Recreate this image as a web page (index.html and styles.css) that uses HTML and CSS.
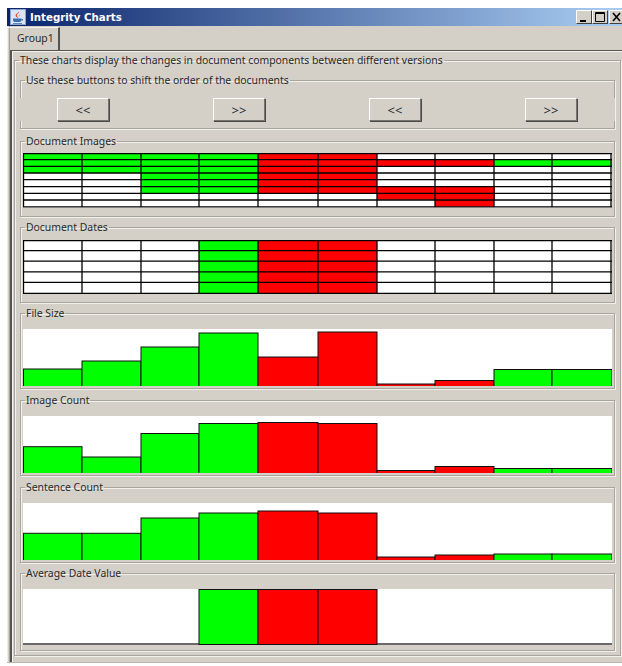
FILE: index.html
```html
<!DOCTYPE html>
<html lang="en">
<head>
<meta charset="utf-8">
<title>Integrity Charts</title>
<link rel="stylesheet" href="styles.css">
</head>
<body>
<div class="window">
  <header class="titlebar">
    <svg class="app-icon" width="16" height="16" viewBox="0 0 16 16">
      <rect width="16" height="16" fill="#dbe4f4"/>
      <rect x="0.5" y="0.5" width="15" height="15" fill="none" stroke="#8fa3cc"/>
      <path d="M9 2c1 2-3 3-2 5 .4.8 1 1 1 2-1-.6-2.400-1.300-2.400-2.600C5.600 4.500 9 4 9 2z" fill="#e0401c"/>
      <path d="M10 5c.5 1.200-1.500 2-1 3.500-.9-1.500.3-2.600 1-3.500z" fill="#e8822c"/>
      <path d="M3 9.500h8.500v1.600c0 1.200-1 1.900-2 1.900h-4.500c-1 0-2-.7-2-1.900z" fill="#3d6fb0"/>
      <path d="M11.500 10h1.500v1.500h-1.500z" fill="#3d6fb0"/>
      <path d="M3 14h9v1h-9z" fill="#5b86bd"/>
    </svg>
    <span class="title-text">Integrity Charts</span>
    <div class="caption-buttons">
      <button class="caption-btn" type="button" aria-label="Minimize"><svg width="12" height="10" viewBox="0 0 12 10"><path d="M2 8h6v2H2z" fill="#000"/></svg></button>
      <button class="caption-btn" type="button" aria-label="Maximize"><svg width="12" height="10" viewBox="0 0 12 10"><path d="M1.500.500h9v9h-9zM1 1.500h10" fill="none" stroke="#000"/></svg></button>
      <button class="caption-btn caption-close" type="button" aria-label="Close"><svg width="12" height="10" viewBox="0 0 12 10"><path d="M2 1l7 8M9 1l-7 8" fill="none" stroke="#000" stroke-width="1.600"/></svg></button>
    </div>
  </header>

  <div class="tabstrip"><div class="tab">Group1</div></div>

  <div class="pane">
    <fieldset class="group outer">
      <legend>These charts display the changes in document components between different versions</legend>

      <fieldset class="group controls">
        <legend>Use these buttons to shift the order of the documents</legend>
        <div class="button-row">
          <button class="shift" type="button">&lt;&lt;</button>
          <button class="shift" type="button">&gt;&gt;</button>
          <button class="shift" type="button">&lt;&lt;</button>
          <button class="shift" type="button">&gt;&gt;</button>
        </div>
      </fieldset>

      <div class="sections">
        <fieldset class="group images">
          <legend>Document Images</legend>
          <svg class="chart" width="589" height="55" viewBox="0 0 589 55">
            <rect class="blank" width="589" height="55"/>
            <rect class="up" x="0" y="0" width="118" height="20"/>
            <rect class="up" x="118" y="0" width="117" height="40"/>
            <rect class="down" x="235" y="0" width="119" height="40"/>
            <rect class="down" x="354" y="6.670" width="118" height="6.670"/>
            <rect class="up" x="471" y="6.670" width="118" height="6.670"/>
            <rect class="down" x="354" y="33.300" width="118" height="13.400"/>
            <rect class="down" x="412" y="46.700" width="59" height="7"/>
            <path class="grid" d="M0 .5H589M0 6.700H589M0 13.300H589M0 20H589M0 26.700H589M0 33.700H589M0 40.300H589M0 47H589M0 53.800H589"/>
            <path class="grid" d="M.5 0V54M59 0V54M118 0V54M176 0V54M235 0V54M295 0V54M354 0V54M412 0V54M471 0V54M529 0V54M588 0V54"/>
          </svg>
        </fieldset>

        <fieldset class="group dates">
          <legend>Document Dates</legend>
          <svg class="chart" width="589" height="54" viewBox="0 0 589 54">
            <rect class="blank" width="589" height="54"/>
            <rect class="up" x="176" y="0" width="59" height="54"/>
            <rect class="down" x="235" y="0" width="119" height="54"/>
            <path class="grid" d="M0 .5H589M0 10.600H589M0 21.200H589M0 31.800H589M0 42.400H589M0 53.300H589"/>
            <path class="grid" d="M.5 0V54M59 0V54M118 0V54M176 0V54M235 0V54M295 0V54M354 0V54M412 0V54M471 0V54M529 0V54M588 0V54"/>
          </svg>
        </fieldset>

        <fieldset class="group bars">
          <legend>File Size</legend>
          <svg class="chart" width="589" height="57" viewBox="0 0 589 57">
            <rect class="blank" width="589" height="57"/>
            <rect class="up bar" x=".5" y="40" width="58.500" height="20"/>
            <rect class="up bar" x="59" y="32" width="59" height="28"/>
            <rect class="up bar" x="118" y="18" width="58" height="42"/>
            <rect class="up bar" x="176" y="4" width="59" height="56"/>
            <rect class="down bar" x="235" y="28" width="60" height="32"/>
            <rect class="down bar" x="295" y="3" width="59" height="57"/>
            <rect class="down bar" x="354" y="55" width="58" height="5"/>
            <rect class="down bar" x="412" y="51.500" width="59" height="8"/>
            <rect class="up bar" x="471" y="40.500" width="58" height="20"/>
            <rect class="up bar" x="529" y="40.500" width="60" height="20"/>
          </svg>
        </fieldset>

        <fieldset class="group bars">
          <legend>Image Count</legend>
          <svg class="chart" width="589" height="57" viewBox="0 0 589 57">
            <rect class="blank" width="589" height="57"/>
            <rect class="up bar" x=".5" y="30.700" width="58.500" height="30"/>
            <rect class="up bar" x="59" y="41" width="59" height="20"/>
            <rect class="up bar" x="118" y="17.500" width="58" height="43"/>
            <rect class="up bar" x="176" y="7.500" width="59" height="53"/>
            <rect class="down bar" x="235" y="6.500" width="60" height="54"/>
            <rect class="down bar" x="295" y="7.500" width="59" height="53"/>
            <rect class="down bar" x="354" y="54.500" width="58" height="6"/>
            <rect class="down bar" x="412" y="50.500" width="59" height="10"/>
            <rect class="up bar" x="471" y="52.500" width="58" height="8"/>
            <rect class="up bar" x="529" y="52.500" width="60" height="8"/>
          </svg>
        </fieldset>

        <fieldset class="group bars">
          <legend>Sentence Count</legend>
          <svg class="chart" width="589" height="57" viewBox="0 0 589 57">
            <rect class="blank" width="589" height="57"/>
            <rect class="up bar" x=".5" y="30.300" width="58.500" height="30"/>
            <rect class="up bar" x="59" y="30.300" width="59" height="30"/>
            <rect class="up bar" x="118" y="15" width="58" height="45"/>
            <rect class="up bar" x="176" y="10" width="59" height="50"/>
            <rect class="down bar" x="235" y="8" width="60" height="52"/>
            <rect class="down bar" x="295" y="10" width="59" height="50"/>
            <rect class="down bar" x="354" y="54" width="58" height="6"/>
            <rect class="down bar" x="412" y="52" width="59" height="8"/>
            <rect class="up bar" x="471" y="51" width="58" height="9"/>
            <rect class="up bar" x="529" y="51" width="60" height="9"/>
          </svg>
        </fieldset>

        <fieldset class="group bars last">
          <legend>Average Date Value</legend>
          <svg class="chart" width="589" height="56" viewBox="0 0 589 56">
            <rect class="blank" width="589" height="56"/>
            <path class="baseline" d="M0 55H589"/>
            <rect class="up bar" x="176" y=".5" width="59" height="55"/>
            <rect class="down bar" x="235" y=".5" width="60" height="55"/>
            <rect class="down bar" x="295" y=".5" width="59" height="55"/>
          </svg>
        </fieldset>
      </div>
    </fieldset>
  </div>
</div>
</body>
</html>
```
FILE: styles.css
```css
* {
  box-sizing: border-box;
}

html,
body {
  margin: 0;
  height: 100%;
  overflow: hidden;
  background: #fff;
}

body {
  font: 10.4px/12px "Noto Sans", sans-serif;
  color: #2a2a2a;
}

.window {
  width: 620px;
  margin: 8px 0 0 7px;
  background: #d4d0c8;
  border-bottom: 1px solid #bdb9b1;
  box-shadow: inset 1px 0 0 #efede8, inset 2px 0 0 #d4d0c8, inset 3px 0 0 #a8a59d;
}

/* Title bar */
.titlebar {
  display: flex;
  align-items: center;
  height: 18px;
  padding: 0 2px 0 3px;
  background: linear-gradient(90deg, #0a246a 0%, #a6caf0 97%);
}

.app-icon {
  flex: none;
}

.title-text {
  margin-left: 4px;
  font: bold 10.25px/14px "DejaVu Sans", sans-serif;
  color: #fff;
}

.caption-buttons {
  display: flex;
  margin-left: auto;
}

.caption-btn {
  display: flex;
  align-items: center;
  justify-content: center;
  width: 16px;
  height: 14px;
  padding: 0;
  background: #d4d0c8;
  border: 1px solid;
  border-color: #fff #404040 #404040 #fff;
}

.caption-close {
  margin-left: 1px;
}

/* Tabs */
.tabstrip {
  height: 24px;
  padding-top: 1px;
}

.tab {
  width: 53px;
  height: 23px;
  padding: 3px 0 0 9px;
  line-height: 14px;
  border-top: 1px solid #f4f2ee;
  border-left: 1px solid #f4f2ee;
  border-right: 2px solid #55534e;
}

.pane {
  margin-left: 3px;
  padding: 3px 6px 6px 2px;
  border-top: 1px solid #55534e;
  border-left: 2px solid #55534e;
  box-shadow: inset 1px 1px 0 #f4f2ee;
}

/* Etched group boxes */
.group {
  min-width: 0;
  margin: 0;
  border: 1px solid #a8a59d;
  box-shadow: inset 1px 1px 0 #f2f0ea, 1px 1px 0 #f2f0ea;
}

.group legend {
  margin-left: 2px;
  padding: 0 1px 1px;
  line-height: 12px;
  white-space: nowrap;
}

.outer {
  padding: 7px 5px 4px;
}

.group.outer > legend {
  margin-left: -1px;
}

.controls {
  padding: 11px 2px 7px;
}

.button-row {
  display: flex;
  gap: 104px;
  height: 23px;
  margin: 0 -3px;
  padding-left: 37px;
  background: #d4d0c8;
}

.shift {
  width: 52px;
  height: 23px;
  padding: 0;
  font: 13px/14px "Noto Sans", sans-serif;
  color: #2a2a2a;
  background: #d4d0c8;
  border: 1px solid;
  border-color: #fff #77746d #77746d #fff;
  box-shadow: 1px 1px 0 #4c4a46;
}

.sections {
  display: flex;
  flex-direction: column;
  gap: 4px;
  margin-top: 6px;
}

.images {
  padding: 5px 2px 8px;
}

.dates {
  padding: 6px 2px 8px;
}

.bars {
  padding: 9px 2px 2px;
  margin-bottom: 1px;
}

.bars.last {
  margin-top: -1px;
  margin-bottom: 0;
  padding-bottom: 5px;
}

/* Charts */
.chart {
  display: block;
}

.blank {
  fill: #fff;
}

.up {
  fill: #0f0;
}

.down {
  fill: #f00;
}

.grid {
  fill: none;
  stroke: #000;
  stroke-width: 1.300;
}

.bar {
  stroke: #111;
  stroke-width: 1;
}

.baseline {
  fill: none;
  stroke: #6a6a6a;
  stroke-width: 2;
}
```
